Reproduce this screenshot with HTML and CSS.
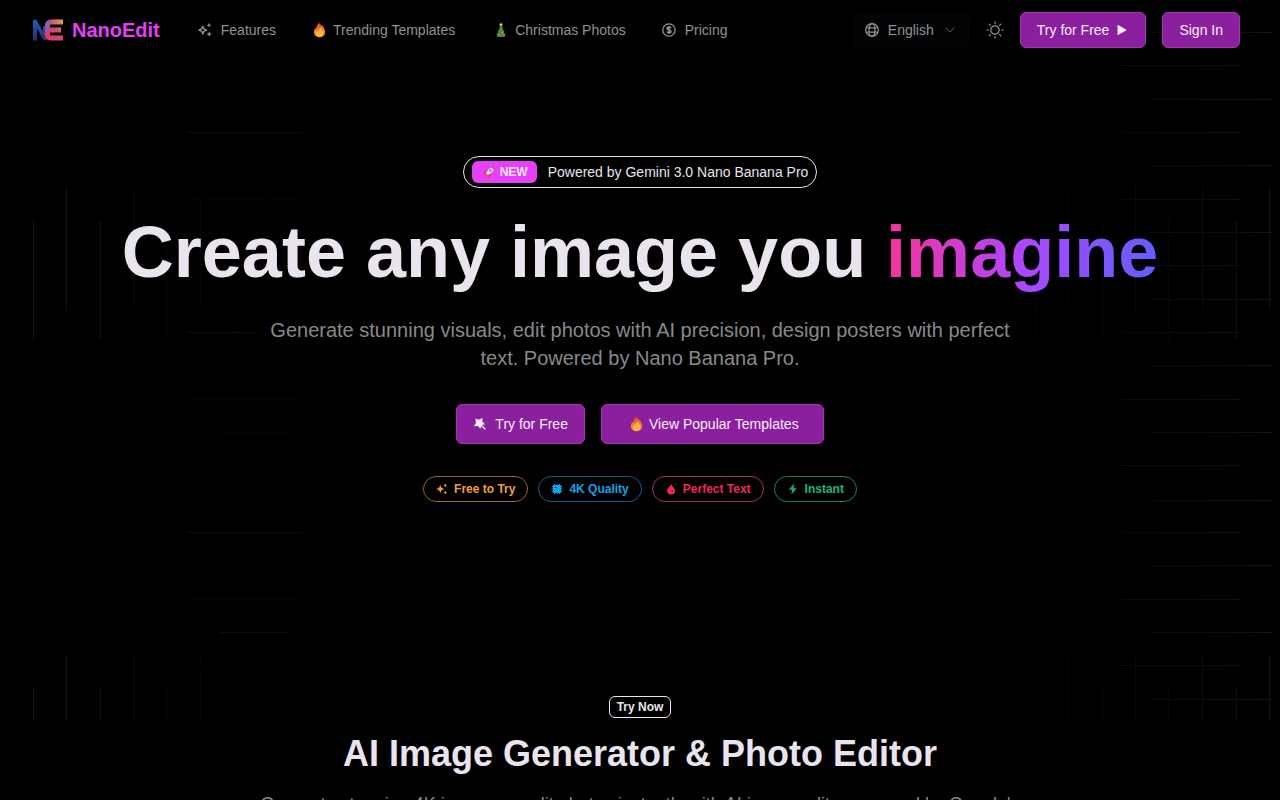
FILE: index.html
```
<!DOCTYPE html>
<html lang="en">
<head>
    <meta charset="UTF-8">
    <meta name="viewport" content="width=device-width, initial-scale=1.0">
    <title>NanoEdit</title>
    <link rel="stylesheet" href="styles.css">
</head>
<body>

    <!-- Faint background grid -->
    <div class="grid-bg" aria-hidden="true">
        <svg width="320" height="720" viewBox="0 0 320 720" fill="none">
            <defs>
                <linearGradient id="fade-left" gradientUnits="userSpaceOnUse" x1="0" y1="0" x2="320" y2="0">
                    <stop offset="0" stop-color="#141414"/>
                    <stop offset="0.25" stop-color="#131313"/>
                    <stop offset="0.4" stop-color="#0a0a0a"/>
                    <stop offset="0.6" stop-color="#050504"/>
                    <stop offset="1" stop-color="#030303"/>
                </linearGradient>
            </defs>
            <g stroke="url(#fade-left)">
                <path d="M66.500 188V310M133.500 188V308M200.500 188V308M266.500 188V308M66.500 656V720M133.500 656V720M200.500 656V720M266.500 656V720"/>
                <path d="M33.500 220V340M100.500 220V340M166.500 220V340M233.500 220V340M33.500 688V720M100.500 688V720M166.500 688V720M233.500 688V720"/>
            </g>
            <path stroke="#0c0c0c" d="M188 132.500H303M188 332.500H256M188 532.500H303M220 632.500H288"/>
            <path stroke="#050505" d="M188 65.500H303M188 199.500H303M188 265.500H303M188 399.500H303M188 465.500H303M188 599.500H303M188 665.500H303M220 165.500H303M220 365.500H303M220 432.500H288M220 565.500H303"/>
        </svg>
        <svg width="320" height="720" viewBox="0 0 320 720" fill="none">
            <defs>
                <linearGradient id="fade-right" gradientUnits="userSpaceOnUse" x1="0" y1="0" x2="320" y2="0">
                    <stop offset="0" stop-color="#020202"/>
                    <stop offset="0.5" stop-color="#090909"/>
                    <stop offset="0.85" stop-color="#0e0e0d"/>
                    <stop offset="1" stop-color="#151513"/>
                </linearGradient>
            </defs>
            <g stroke="url(#fade-right)">
                <path d="M309.500 188V308M242.500 188V308M175.500 188V308M108.500 188V308M41.500 188V308M309.500 656V720M242.500 656V720M175.500 656V720M108.500 656V720M41.500 656V720"/>
                <path d="M276.500 220V340M209.500 220V340M142.500 220V340M75.500 220V340M276.500 688V720M209.500 688V720M142.500 688V720"/>
                <path d="M160 65.500H280M160 132.500H280M160 199.500H280M160 265.500H280M160 332.500H280M160 399.500H280M160 465.500H280M160 532.500H280M160 599.500H280M160 665.500H280"/>
                <path d="M192 32.500H312M192 99.500H312M192 165.500H312M192 232.500H312M192 299.500H312M192 365.500H312M192 432.500H312M192 500.500H312M192 565.500H312M192 632.500H312M192 699.500H312"/>
            </g>
        </svg>
    </div>

    <!-- Shared emoji shapes -->
    <svg class="sprite" aria-hidden="true">
        <defs>
            <linearGradient id="flame-fill" x1="0" y1="0" x2="0" y2="1">
                <stop offset="0" stop-color="#e8402f"/>
                <stop offset="0.6" stop-color="#f8803a"/>
                <stop offset="1" stop-color="#ff9a1f"/>
            </linearGradient>
        </defs>
        <symbol id="fire" viewBox="0 0 16 16">
            <path fill="url(#flame-fill)" d="M8.500.8c.3 1.300 1.300 2 2 3l.6-.9c1.700 2 3 4.700 3 7.200 0 3.100-2.200 5.200-5.300 5.200s-5.800-1.800-5.800-5c0-1.900.5-3.300 1.400-4.300l.6 1c.2-2.500 1.500-4.800 3.500-6.200z"/>
            <path fill="#ffb93f" d="M9.700 5.500c1.600 1.600 2.600 3.600 2.600 5.500 0 2.300-1.500 3.700-3.500 3.700s-3.700-1.200-3.700-3.200c0-1.300.7-2.300 1.500-3l.8 1c.2-1.600 1.200-3 2.300-4z"/>
        </symbol>
    </svg>

    <header class="header">
        <a class="brand" href="#">
            <svg width="32" height="24" viewBox="0 0 32 24" fill="none" stroke-width="5" stroke-linejoin="round" aria-hidden="true">
                <defs>
                    <linearGradient id="mark-blue" x1="0" y1="0" x2="0" y2="1">
                        <stop offset="0" stop-color="#2458ad"/>
                        <stop offset="1" stop-color="#263171"/>
                    </linearGradient>
                    <linearGradient id="mark-warm" x1="1" y1="0" x2="0" y2="1">
                        <stop offset="0" stop-color="#ed934e"/>
                        <stop offset="0.5" stop-color="#c4487c"/>
                        <stop offset="1" stop-color="#ef3468"/>
                    </linearGradient>
                </defs>
                <path stroke="url(#mark-blue)" stroke-width="4" d="M3 22.500V3.500L13 20.500V8"/>
                <path stroke="url(#mark-warm)" stroke-width="5" d="M31 4H19Q15.500 4 15.500 8V16Q15.500 20 19 20H31M16 12H29"/>
                <path stroke="#8a62a8" stroke-width="4" stroke-linecap="round" d="M18 4Q15 5 15 8V11"/>
            </svg>
            <span>NanoEdit</span>
        </a>

        <nav class="nav">
            <a href="#">
                <svg width="16" height="16" viewBox="0 0 16 16" fill="currentColor" aria-hidden="true">
                    <path fill="none" stroke="currentColor" stroke-width="1.400" stroke-linejoin="round" d="M5.800 4.300l1.100 2.600 2.700 1.200-2.700 1.200-1.100 2.600-1.200-2.600L1.900 8.100l2.700-1.200z"/>
                    <path d="M12 .8l.7 1.700 1.700.7-1.700.7-.7 1.700-.7-1.700-1.700-.7 1.700-.7zM12.200 9.400l.8 1.900 1.900.8-1.900.8-.8 1.900-.8-1.900-1.900-.8 1.900-.8z"/>
                </svg>
                Features
            </a>
            <a class="nav-emoji" href="#">
                <svg width="16" height="16" aria-hidden="true"><use href="#fire"/></svg>
                Trending Templates
            </a>
            <a class="nav-emoji" href="#">
                <svg width="16" height="16" viewBox="0 0 16 16" aria-hidden="true">
                    <path fill="#8b8a80" d="M3.500 12.500h9l-1 2.300h-7z"/>
                    <path fill="#4d8a35" d="M8 2.500l2.200 3.700-.9.200 2.300 3.300-1 .2 2.100 3c-2.500 1.200-6.800 1.200-9.300 0l2.100-3-1-.2 2.300-3.300-.9-.2z"/>
                    <path fill="#e8d44f" d="M8 .5l.6 1.300 1.400.2-1 1 .2 1.300-1.200-.7-1.200.7.2-1.300-1-1 1.400-.2z"/>
                    <circle cx="7" cy="8" r=".7" fill="#d55245"/>
                    <circle cx="9.500" cy="11" r=".7" fill="#e8c44f"/>
                    <circle cx="5.700" cy="12" r=".7" fill="#84b7d8"/>
                </svg>
                Christmas Photos
            </a>
            <a href="#">
                <svg width="16" height="16" viewBox="0 0 16 16" fill="none" stroke="currentColor" stroke-width="1.300" aria-hidden="true">
                    <circle cx="8" cy="8" r="6.200"/>
                    <path stroke-width="1.500" d="M10 6.200C9.500 5.400 8.900 5.200 8 5.200c-1.200 0-2 .5-2 1.300C6 8.400 10 7.500 10 9.500c0 .9-.8 1.400-2 1.400-1 0-1.700-.4-2.100-1.200M8 4v8"/>
                </svg>
                Pricing
            </a>
        </nav>

        <div class="tools">
            <label class="language">
                <svg width="16" height="16" viewBox="0 0 16 16" fill="none" stroke="currentColor" stroke-width="1.200" aria-hidden="true">
                    <circle cx="8" cy="8" r="6.300"/>
                    <ellipse cx="8" cy="8" rx="3" ry="6.300"/>
                    <path d="M2.200 5.800h11.600M2.200 10.200h11.600"/>
                </svg>
                <select aria-label="Language">
                    <option>English</option>
                </select>
                <svg class="chevron" width="16" height="16" viewBox="0 0 16 16" fill="none" stroke="currentColor" aria-hidden="true">
                    <path d="M3.500 5.500L8 10l4.500-4.500"/>
                </svg>
            </label>
            <button class="theme" type="button" aria-label="Toggle theme">
                <svg width="18" height="18" viewBox="0 0 18 18" fill="none" stroke="currentColor" stroke-width="1.200" stroke-linecap="round" aria-hidden="true">
                    <circle cx="9" cy="9" r="4.200"/>
                    <path d="M9 .8v1.700M9 15.500v1.700M.8 9h1.700M15.500 9h1.700M3.200 3.200l1.200 1.200M13.600 13.600l1.200 1.200M3.200 14.800l1.200-1.200M13.600 4.400l1.200-1.200"/>
                </svg>
            </button>
            <div class="actions">
                <button class="btn" type="button">
                    Try for Free
                    <svg width="16" height="16" viewBox="0 0 16 16" fill="currentColor" aria-hidden="true">
                        <path d="M4.500 3.300v9.400c0 .4.300.5.600.3l8-4.600c.3-.2.300-.6 0-.8l-8-4.600c-.3-.2-.6 0-.6.300z"/>
                    </svg>
                </button>
                <button class="btn" type="button">Sign In</button>
            </div>
        </div>
    </header>

    <main>
        <section class="hero">
            <a class="announce" href="#">
                <span class="new">
                    <svg width="14" height="14" viewBox="0 0 14 14" aria-hidden="true">
                        <path fill="#d5484d" d="M5.500 5L2.800 5.700.8 8.500l3 .2zM9 8.500l-.7 2.700-2.800 2-.2-3z"/>
                        <path fill="#dce3e8" d="M12.200 1.700C8.800 1.800 6 4 3.900 8.100l2 2c4.100-2.100 6.300-5 6.300-8.400z"/>
                        <path fill="#d5484d" d="M12.500 1.400l-3.300.8 2.500 2.500z"/>
                        <circle cx="8.400" cy="5.600" r="1.400" fill="#7a91b7"/>
                        <path fill="#d5603d" d="M3 9l2 2-3.600 1.600z"/>
                    </svg>
                    NEW
                </span>
                Powered by Gemini 3.0 Nano Banana Pro
            </a>
            <h1>Create any image you <span class="gradient">imagine</span></h1>
            <p class="lead">Generate stunning visuals, edit photos with AI precision, design posters with perfect text. Powered by Nano Banana Pro.</p>
            <div class="hero-actions">
                <button class="btn btn-lg" type="button">
                    <svg width="14" height="14" viewBox="0 0 14 14" fill="currentColor" aria-hidden="true">
                        <path d="M2.500 1.500l3.300 1.300L9.500 1l-.2 3.600 2.700 2.700-3.400.8-1.300 3.700-2.400-2.800-4 .3 2-3.400z"/>
                        <path stroke="currentColor" stroke-width="1.500" d="M8 8l4.300 4.300"/>
                    </svg>
                    Try for Free
                </button>
                <button class="btn btn-lg btn-wide" type="button">
                    <svg width="16" height="16" aria-hidden="true"><use href="#fire"/></svg>
                    View Popular Templates
                </button>
            </div>
            <ul class="pills">
                <li class="amber">
                    <svg width="12" height="12" viewBox="0 0 12 12" fill="currentColor" aria-hidden="true">
                        <path d="M4.300 2l1.200 2.800 2.800 1.200-2.800 1.200L4.300 10 3.100 7.200.3 6l2.800-1.200zM9.300.5l.6 1.300 1.300.6-1.300.6-.6 1.300-.6-1.300-1.300-.6 1.300-.6zM9.300 7.700l.6 1.300 1.300.6-1.300.6-.6 1.300-.6-1.300-1.300-.6L8.700 9z"/>
                    </svg>
                    Free to Try
                </li>
                <li class="blue">
                    <svg width="12" height="12" viewBox="0 0 12 12" fill="none" aria-hidden="true">
                        <rect x="2" y="2" width="8" height="8" rx="1" fill="currentColor"/>
                        <path stroke="currentColor" d="M3.500 1v10M6 1v10M8.500 1v10M1 3.500h10M1 6h10M1 8.500h10"/>
                        <path stroke="#064766" d="M3.500 4.500h2"/>
                    </svg>
                    4K Quality
                </li>
                <li class="rose">
                    <svg width="12" height="12" viewBox="0 0 12 12" fill="currentColor" aria-hidden="true">
                        <path d="M6.200.6c.1 1.600 1 2.300 1.700 3.100L9 4.900c.8.9 1.200 1.700 1.200 2.800 0 2.300-1.800 3.800-4.200 3.800S2 10 2 7.800c0-1.500.8-2.600 1.900-3.500C5 3.300 5.900 2.200 6.200.6z"/>
                        <path stroke="#000" stroke-width=".8" fill="none" d="M7 8.500l1.300-1.300"/>
                    </svg>
                    Perfect Text
                </li>
                <li class="green">
                    <svg width="12" height="12" viewBox="0 0 12 12" fill="currentColor" aria-hidden="true">
                        <path d="M7 .8L1.900 6.700h3.200L4.600 11.300l5.200-6.100H6.500z"/>
                    </svg>
                    Instant
                </li>
            </ul>
        </section>

        <section class="editor">
            <span class="tag">Try Now</span>
            <h2>AI Image Generator &amp; Photo Editor</h2>
            <p>Generate stunning 4K images or edit photos instantly with AI image editor powered by Google's Nano Banana Pro.</p>
        </section>
    </main>

</body>
</html>
```
FILE: styles.css
```
* {
    box-sizing: border-box;
}
body {
    margin: 0;
    position: relative;
    background: #000001;
    color: #e9e4ed;
    font-family: "Liberation Sans", Arial, sans-serif;
    font-size: 14px;
    line-height: 20px;
}
a {
    color: inherit;
    text-decoration: none;
}
button,
select {
    font: inherit;
    color: inherit;
    cursor: pointer;
}
svg {
    flex: none;
}
.sprite {
    position: absolute;
    width: 0;
    height: 0;
}
.grid-bg {
    position: absolute;
    inset: 0;
    z-index: -1;
    display: flex;
    justify-content: space-between;
    overflow: hidden;
}

/* Header */
.header {
    display: flex;
    align-items: center;
    padding: 12px 40px 12px 32px;
}
.brand {
    display: flex;
    align-items: center;
    gap: 8px;
    color: #e43ff5;
    font-size: 20px;
    font-weight: bold;
}
.nav {
    display: flex;
    gap: 32px;
    margin-left: 37px;
    color: #919193;
    white-space: nowrap;
}
.nav a {
    display: flex;
    align-items: center;
    gap: 8px;
}
.nav .nav-emoji {
    gap: 6px;
    padding: 0 3px;
}
.tools {
    display: flex;
    align-items: center;
    gap: 16px;
    margin-left: auto;
    color: #919193;
}
.language {
    display: flex;
    align-items: center;
    gap: 8px;
    height: 36px;
    padding: 0 12px;
    border-radius: 6px;
    background: #020305;
}
.language select {
    appearance: none;
    width: 46px;
    padding: 0;
    border: 0;
    background: transparent;
}
.chevron {
    opacity: 0.6;
}
.theme {
    display: flex;
    padding: 0;
    border: 0;
    background: none;
}
.actions {
    display: flex;
    gap: 16px;
}
.btn {
    display: flex;
    align-items: center;
    justify-content: center;
    gap: 4px;
    height: 36px;
    padding: 0 16px;
    border: 1px solid #a433b6;
    border-radius: 6px;
    background: #8b209f;
    color: #fcecff;
    font-weight: 500;
    white-space: nowrap;
}
.btn-lg {
    gap: 8px;
    height: 40px;
}
.btn-wide {
    gap: 5px;
    padding: 0 24px 0 26px;
}

/* Hero */
.hero {
    display: flex;
    flex-direction: column;
    align-items: center;
    padding: 96px 32px 98px;
    text-align: center;
}
.announce {
    display: flex;
    align-items: center;
    gap: 11px;
    height: 32px;
    padding: 0 8px;
    border: 1px solid #e9e4ed;
    border-radius: 16px;
}
.new {
    display: flex;
    align-items: center;
    gap: 4px;
    height: 22px;
    padding: 0 9px 0 10px;
    border-radius: 6px;
    background: #e83ff8;
    color: #fcecff;
    font-size: 12px;
    font-weight: bold;
}
h1 {
    margin: 28px 0;
    font-size: 72px;
    line-height: 72px;
}
.gradient {
    background: linear-gradient(to right, #f6339a, #ad46ff, #615fff);
    background-clip: text;
    -webkit-background-clip: text;
    color: transparent;
}
.lead {
    max-width: 768px;
    margin: 0;
    color: #89898b;
    font-size: 20px;
    line-height: 28px;
}
.hero-actions {
    display: flex;
    gap: 16px;
    margin: 32px 0;
}
.pills {
    display: flex;
    gap: 10px;
    margin: 0;
    padding: 0;
    list-style: none;
}
.pills li {
    display: flex;
    align-items: center;
    gap: 6px;
    height: 26px;
    padding: 0 12px;
    border: 1px solid;
    border-radius: 13px;
    font-size: 12px;
    font-weight: bold;
}
.pills .amber {
    border-color: #956717;
    color: #f2a02c;
}
.pills .blue {
    border-color: #08658e;
    color: #0da5e9;
}
.pills .rose {
    border-color: #a03751;
    color: #ee2858;
}
.pills .green {
    border-color: #16825d;
    color: #10b77f;
}

/* Editor */
.editor {
    display: flex;
    flex-direction: column;
    align-items: center;
    padding: 96px 32px;
    text-align: center;
}
.tag {
    height: 22px;
    padding: 0 7px;
    border: 1px solid #e9e4ed;
    border-radius: 6px;
    font-size: 12px;
    font-weight: bold;
}
h2 {
    margin: 16px 0;
    font-size: 36px;
    line-height: 40px;
}
.editor p {
    max-width: 768px;
    margin: 0;
    color: #89898b;
    font-size: 18px;
    line-height: 28px;
}
```
